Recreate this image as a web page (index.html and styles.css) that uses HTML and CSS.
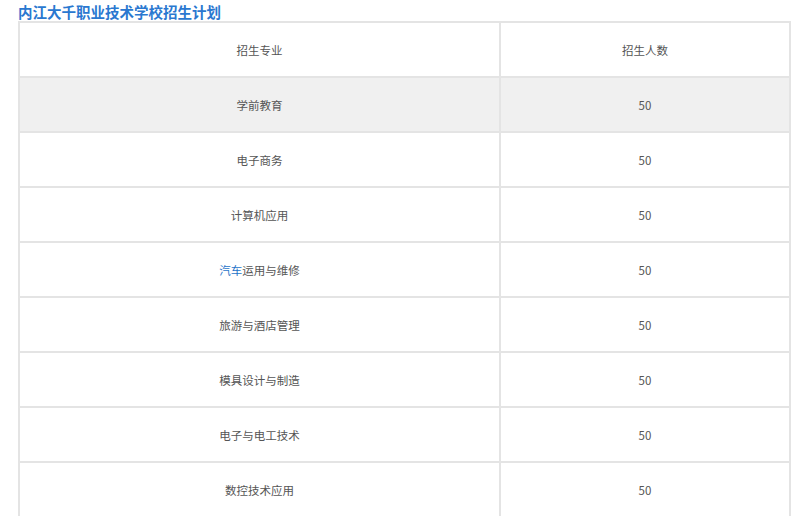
FILE: index.html
```html
<!DOCTYPE html>
<html lang="zh-CN">
<head>
<meta charset="utf-8">
<title>内江大千职业技术学校招生计划</title>
<link rel="stylesheet" href="styles.css">
</head>
<body>
<div class="page">
  <h2 class="title">内江大千职业技术学校招生计划</h2>
  <table class="plan">
    <thead>
      <tr><th class="c1">招生专业</th><th class="c2">招生人数</th></tr>
    </thead>
    <tbody>
      <tr class="hover"><td>学前教育</td><td>50</td></tr>
      <tr><td>电子商务</td><td>50</td></tr>
      <tr><td>计算机应用</td><td>50</td></tr>
      <tr><td><a class="kw" href="#">汽车</a>运用与维修</td><td>50</td></tr>
      <tr><td>旅游与酒店管理</td><td>50</td></tr>
      <tr><td>模具设计与制造</td><td>50</td></tr>
      <tr><td>电子与电工技术</td><td>50</td></tr>
      <tr><td>数控技术应用</td><td>50</td></tr>
    </tbody>
  </table>
</div>
</body>
</html>
```
FILE: styles.css
```css
html, body {
  margin: 0;
  padding: 0;
  background: #fff;
}
body {
  font-family: "Noto Sans CJK SC", "Microsoft YaHei", sans-serif;
  color: #555;
  overflow: hidden;
}
.page {
  padding: 0 9px 0 18px;
}
.title {
  margin: 0;
  height: 21px;
  line-height: 24px;
  font-size: 14.5px;
  font-weight: bold;
  color: #2a78d0;
  letter-spacing: 0;
}
.plan {
  width: 773px;
  border-collapse: collapse;
  table-layout: fixed;
  font-size: 11.5px;
}
.plan th, .plan td {
  border: 2px solid #e4e4e4;
  height: 53px;
  padding: 0;
  text-align: center;
  vertical-align: middle;
  font-weight: normal;
  color: #555;
}
.plan .c1 { width: 479px; }
.plan tr.hover td { background: #f0f0f0; }
.kw {
  color: #1f74c9;
  text-decoration: none;
}
```
